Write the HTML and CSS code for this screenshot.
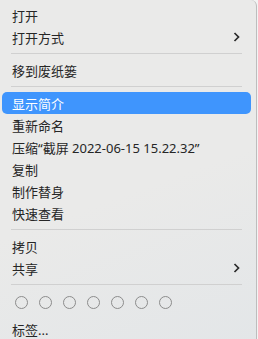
FILE: index.html
```
<!DOCTYPE html>
<html lang="zh">
<head>
    <meta charset="UTF-8">
    <meta name="viewport" content="width=device-width, initial-scale=1.0">
    <title>菜单</title>
    <link rel="stylesheet" href="styles.css">
</head>
<body>
    <div class="menu">
        <div class="item">打开</div>
        <div class="item">打开方式
            <svg class="chev" width="7" height="10" viewBox="0 0 7 10"><polyline points="1.5,1 5.5,5 1.5,9" fill="none" stroke="#2a2a2a" stroke-width="1.7"/></svg>
        </div>
        <div class="sep"></div>
        <div class="item">移到废纸篓</div>
        <div class="sep"></div>
        <div class="item active">显示简介</div>
        <div class="item">重新命名</div>
        <div class="item">压缩“截屏 2022-06-15 15.22.32”</div>
        <div class="item">复制</div>
        <div class="item">制作替身</div>
        <div class="item">快速查看</div>
        <div class="sep"></div>
        <div class="item">拷贝</div>
        <div class="item">共享
            <svg class="chev" width="7" height="10" viewBox="0 0 7 10"><polyline points="1.5,1 5.5,5 1.5,9" fill="none" stroke="#2a2a2a" stroke-width="1.7"/></svg>
        </div>
        <div class="sep"></div>
        <!-- tag colours -->
        <div class="tags">
            <span class="dot"></span>
            <span class="dot"></span>
            <span class="dot"></span>
            <span class="dot"></span>
            <span class="dot"></span>
            <span class="dot"></span>
            <span class="dot"></span>
        </div>
        <div class="item">标签...</div>
    </div>
</body>
</html>
```
FILE: styles.css
```
body {
    margin: 0;
    background: #f3f3f3;
    font-family: "Noto Sans", "Noto Sans CJK SC", sans-serif;
    overflow: hidden;
}
.menu {
    width: 249px;
    height: 339px;
    padding: 4px 5px 0 2px;
    background: linear-gradient(160deg, #eaeae9 55%, #e3e6e8 100%);
    border-right: 1px solid #bdbdbd;
    border-top-right-radius: 6px;
    box-sizing: content-box;
}
.item {
    display: flex;
    align-items: center;
    justify-content: space-between;
    height: 22px;
    padding: 0 10px;
    font-size: 13px;
    color: #262626;
    border-radius: 5px;
    white-space: nowrap;
}
.item.active {
    background-color: #3f95fd;
    color: white;
}
.chev {
    margin-right: 1px;
}
.sep {
    height: 1px;
    margin: 5px 9px;
    background: #d0d0d0;
}
.tags {
    display: flex;
    align-items: center;
    gap: 11px;
    height: 24px;
    padding: 0 13px;
    margin-bottom: 4px;
}
.dot {
    width: 11px;
    height: 11px;
    border: 1.3px solid #8c8c8c;
    border-radius: 50%;
}
```
